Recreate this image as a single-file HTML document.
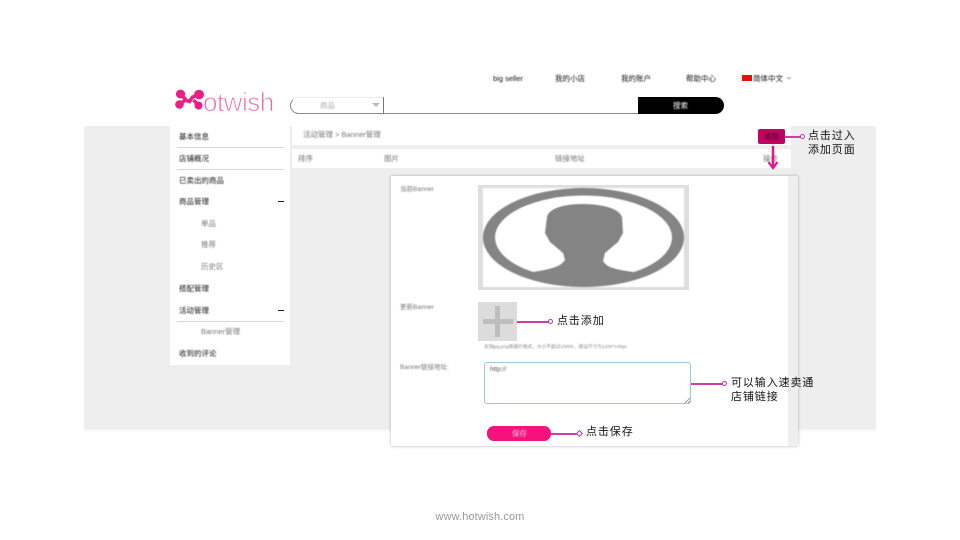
<!DOCTYPE html>
<html lang="zh">
<head>
<meta charset="utf-8">
<style>
html,body{margin:0;padding:0;background:#fff;}
body{width:960px;height:540px;position:relative;overflow:hidden;font-family:"Liberation Sans","Noto Sans CJK SC",sans-serif;}
div,span,svg{position:absolute;}
.t{white-space:nowrap;font-size:7.5px;line-height:10px;color:#555;filter:blur(.4px);}
.d{color:#111;}
.g{color:#777;}
.s{font-size:6.5px;}
.call{white-space:nowrap;font-size:11px;line-height:14px;color:#111;letter-spacing:.9px;filter:blur(.2px);}
.hr{background:#d8d8d8;height:1px;left:177px;width:107px;}
.minus{background:#222;height:1px;width:6px;left:278px;}
.ln{background:#d23aa6;height:1.500px;}
.dot{width:5px;height:5px;border:1px solid #c0359a;border-radius:50%;box-sizing:border-box;background:#fff;}
</style>
</head>
<body>
<!-- gray band -->
<div style="left:84px;top:126px;width:792px;height:303px;background:#eeeeee;"></div>
<div style="left:84px;top:429px;width:792px;height:3px;background:linear-gradient(#f3f3f3,#fff);"></div>

<!-- logo -->
<svg style="left:174px;top:88px;" width="32" height="24" viewBox="0 0 32 24">
<g fill="#ee1c84" stroke="#ee1c84">
<ellipse cx="6.500" cy="6" rx="4.600" ry="4.400" stroke="none"/>
<ellipse cx="5.500" cy="16.500" rx="4.300" ry="4.300" stroke="none"/>
<ellipse cx="25" cy="6.500" rx="5" ry="4.800" stroke="none"/>
<ellipse cx="24.500" cy="17.500" rx="4" ry="4" stroke="none"/>
<path d="M7 7L12 11.500M6 16L11.500 12L15.500 13.500L18.500 9L24 7M19.500 12L24 17" stroke-width="3.400" fill="none"/>
</g>
</svg>
<div style="left:203px;top:86px;font-size:26px;line-height:32px;color:#f26aa8;letter-spacing:-.5px;white-space:nowrap;font-family:'Liberation Sans',sans-serif;-webkit-text-stroke:.85px #fff;filter:blur(.25px);">otwish</div>

<!-- top nav -->
<div class="t d" style="left:493px;top:74px;">big seller</div>
<div class="t d" style="left:555px;top:74px;">我的小店</div>
<div class="t d" style="left:621px;top:74px;">我的账户</div>
<div class="t d" style="left:686px;top:74px;">帮助中心</div>
<div style="left:742px;top:75px;width:10px;height:6px;background:#e8100c;"></div>
<div class="t d" style="left:753px;top:74px;">简体中文</div>
<svg style="left:786px;top:77px;" width="6" height="4"><path d="M0 0H6L3 3Z" fill="#c9c9c9"/></svg>

<!-- search -->
<div style="left:290px;top:97px;width:93px;height:17px;border:1px solid #8a8a8a;border-right:none;border-top-color:#eee;border-radius:9px 0 0 9px;box-sizing:border-box;"></div>
<div style="left:383px;top:113px;width:256px;height:1px;background:#8a8a8a;"></div>
<div style="left:383px;top:97px;width:1px;height:17px;background:#777;"></div>
<div class="t" style="left:320px;top:101px;color:#aaa;">商品</div>
<svg style="left:372px;top:103px;" width="8" height="5"><path d="M0 0H8L4 4Z" fill="#bbb"/></svg>
<div style="left:638px;top:97px;width:86px;height:17px;background:#000;border-radius:0 9px 9px 0;"></div>
<div class="t" style="left:673px;top:101px;color:#fff;">搜索</div>

<!-- sidebar -->
<div style="left:170px;top:126px;width:120px;height:239px;background:#fff;"></div>
<div class="t d" style="left:179px;top:132px;">基本信息</div>
<div class="hr" style="top:147px;"></div>
<div class="t d" style="left:179px;top:154px;">店铺概况</div>
<div class="hr" style="top:169px;"></div>
<div class="t d" style="left:179px;top:176px;">已卖出的商品</div>
<div class="t d" style="left:179px;top:197px;">商品管理</div>
<div class="minus" style="top:201px;"></div>
<div class="t g" style="left:201px;top:219px;">单品</div>
<div class="t g" style="left:201px;top:240px;">推荐</div>
<div class="t g" style="left:201px;top:262px;">历史区</div>
<div class="t d" style="left:179px;top:284px;">搭配管理</div>
<div class="t d" style="left:179px;top:306px;">活动管理</div>
<div class="minus" style="top:310px;"></div>
<div class="hr" style="top:321px;"></div>
<div class="t g" style="left:201px;top:327px;">Banner管理</div>
<div class="t d" style="left:179px;top:349px;">收到的评论</div>

<!-- content header -->
<div style="left:292px;top:126px;width:499px;height:19px;background:#fff;"></div>
<div style="left:292px;top:149px;width:499px;height:19px;background:#fff;"></div>
<div class="t g" style="left:303px;top:130px;">活动管理 &gt; Banner管理</div>
<div class="t g" style="left:298px;top:154px;">排序</div>
<div class="t g" style="left:384px;top:154px;">图片</div>
<div class="t g" style="left:555px;top:154px;">链接地址</div>
<div class="t g" style="left:763px;top:154px;">操作</div>

<!-- add button -->
<div style="left:758px;top:129px;width:27px;height:15px;background:#c0045f;border-radius:2px;"></div>
<div class="t" style="left:764px;top:132px;color:#3a0a20;">添加</div>
<div class="ln" style="left:785px;top:136px;width:16px;"></div>
<div class="dot" style="left:800px;top:134px;"></div>
<div class="call" style="left:808px;top:129px;">点击过入<br>添加页面</div>

<!-- panel -->
<div style="left:391px;top:176px;width:407px;height:270px;background:linear-gradient(90deg,#fff 0,#fff 397px,#efefef 397px);box-shadow:0 0 3px rgba(0,0,0,.3);"></div>

<!-- arrow -->
<svg style="left:767px;top:146px;" width="12" height="24"><path d="M6 0V21" stroke="#e8128a" stroke-width="2.500"/><path d="M1.500 16L6 22L10.500 16" stroke="#e8128a" stroke-width="2.200" fill="none"/></svg>

<div class="t g s" style="left:400px;top:185px;">当前Banner</div>
<div style="left:478px;top:185px;width:211px;height:105px;background:#dedede;"></div>
<svg style="left:483px;top:188px;filter:blur(.4px);" width="201" height="99" viewBox="0 0 201 99">
<rect width="201" height="99" fill="#fff"/>
<path fill-rule="evenodd" fill="#848484" d="M0 49.500A100.500 49.500 0 1 0 201 49.500A100.500 49.500 0 1 0 0 49.500ZM12 49.500A88.500 42 0 1 1 189 49.500A88.500 42 0 1 1 12 49.500Z"/>
<path fill="#848484" d="M64 29C66 20 82 16 99 16C118 16 136 20 139 29L140 45L135 54L122 65L120 73C124 79 130 82 160 85L100 96L40 85C70 82 78 78 82 72L80 65L67 54L62 45Z"/>
</svg>

<div class="t g s" style="left:400px;top:303px;">更新Banner</div>
<div style="left:478px;top:302px;width:39px;height:39px;background:#dcdcdc;"></div>
<div style="left:483px;top:319px;width:30px;height:5px;background:#bdbdbd;"></div>
<div style="left:495px;top:306px;width:5px;height:31px;background:#bdbdbd;"></div>
<div class="ln" style="left:517px;top:321px;width:32px;"></div>
<div class="dot" style="left:548px;top:319px;"></div>
<div class="call" style="left:557px;top:314px;">点击添加</div>
<div class="t" style="left:484px;top:343px;font-size:4.7px;line-height:7px;color:#888;">支持jpg,png等图片格式，大小不超过1000K，建议尺寸为1200*140px</div>

<div class="t g s" style="left:400px;top:363px;">Banner链接地址:</div>
<div style="left:484px;top:362px;width:207px;height:42px;box-sizing:border-box;background:#fff;border:1px solid #9cc8dc;border-radius:3px;"></div>
<div class="t s" style="left:490px;top:365px;color:#555;">http://</div>
<svg style="left:685px;top:398px;" width="5" height="5"><path d="M0 5L5 0M3 5L5 3" stroke="#888" stroke-width=".8"/></svg>
<div class="ln" style="left:691px;top:383px;width:32px;"></div>
<div class="dot" style="left:722px;top:381px;"></div>
<div class="call" style="left:731px;top:376px;">可以输入速卖通<br>店铺链接</div>

<div style="left:487px;top:426px;width:64px;height:15px;background:#f5127f;border-radius:7px;"></div>
<div class="t" style="left:512px;top:429px;color:#f7c5dc;">保存</div>
<div class="ln" style="left:551px;top:433px;width:27px;"></div>
<div style="left:577px;top:431px;width:5px;height:5px;border:1px solid #c0359a;transform:rotate(45deg);box-sizing:border-box;background:#fff;"></div>
<div class="call" style="left:586px;top:425px;">点击保存</div>

<!-- footer -->
<div style="left:0;top:511px;width:960px;text-align:center;font-size:11px;line-height:13px;color:#9a9a9a;letter-spacing:.1px;">www.hotwish.com</div>
</body>
</html>
